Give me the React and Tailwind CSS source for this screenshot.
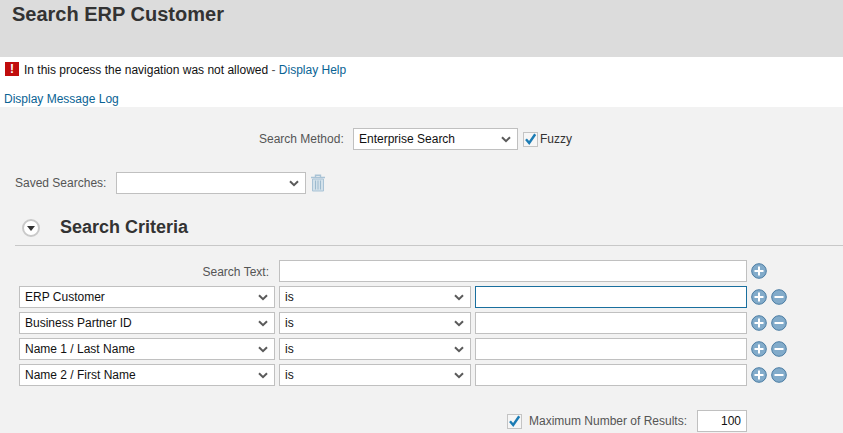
import React from "react";

const Chevron = () => (
  <svg width="10" height="7" viewBox="0 0 10 7" className="shrink-0">
    <path d="M1 1.2 L5 5.2 L9 1.2" fill="none" stroke="#5a5a5a" strokeWidth="2" />
  </svg>
);

const Select = ({ value, className }) => (
  <div className={`flex h-[22px] items-center justify-between border border-[#c0c0c0] bg-white pl-[5px] pr-[6px] text-[12px] text-[#111] ${className}`}>
    <span>{value}</span>
    <Chevron />
  </div>
);

const Input = ({ className, children }) => (
  <div className={`h-[22px] border bg-white ${className}`}>{children}</div>
);

const Check = () => (
  <span className="flex h-[15px] w-[15px] shrink-0 items-center justify-center border border-[#c4c4c4] bg-[#f6f6f6]">
    <svg width="13" height="12" viewBox="0 0 13 12">
      <path d="M2 6.2 L5.2 10 L11.2 1.2" fill="none" stroke="#1c7cb4" strokeWidth="2.4" />
    </svg>
  </span>
);

const RoundButton = ({ minus }) => (
  <svg width="16" height="16" viewBox="0 0 16 16" className="shrink-0">
    <circle cx="8" cy="8" r="7.3" fill="#82abca" stroke="#4a7ca3" strokeWidth="1" />
    <rect x="3.5" y="7" width="9" height="2" fill="#fff" />
    {!minus && <rect x="7" y="3.5" width="2" height="9" fill="#fff" />}
  </svg>
);

const Trash = () => (
  <svg width="16" height="18" viewBox="0 0 16 18">
    <path d="M1 3.5 H15 M5.5 3 V1.2 H10.5 V3" fill="none" stroke="#a9c3d6" strokeWidth="1.4" />
    <path d="M2.5 5 H13.5 V17 H2.5 Z" fill="#d3e1ea" stroke="#a9c3d6" strokeWidth="1" />
    <path d="M5.5 6.5 V15.5 M8 6.5 V15.5 M10.5 6.5 V15.5" stroke="#9dbace" strokeWidth="1" />
  </svg>
);

const rows = ["ERP Customer", "Business Partner ID", "Name 1 / Last Name", "Name 2 / First Name"];

export default function App() {
  return (
    <div className="h-[433px] w-[843px] overflow-hidden bg-[#f2f2f2] font-['Liberation_Sans',Arial,sans-serif]">
      <header className="h-[57px] bg-[#dcdcdc] pl-3 pt-[2px]">
        <h1 className="text-[20px] font-bold leading-[24px] text-[#333]">Search ERP Customer</h1>
      </header>

      <section className="h-[50px] bg-white pl-[4px] pt-[4px] text-[12px]">
        <div className="flex h-[18px] items-center gap-[5px] pl-[1px]">
          <span className="flex h-[14px] w-[14px] -translate-y-[1px] items-center justify-center bg-[#c00d0d] text-[12px] font-bold leading-none text-white">!</span>
          <span className="text-[#111]">
            In this process the navigation was not allowed <span className="text-[#555]">- </span>
            <span className="text-[#0a6394]">Display Help</span>
          </span>
        </div>
        <div className="mt-[13px] leading-[14px] text-[#0a6394]">Display Message Log</div>
      </section>

      <main className="px-0 pt-[21px] text-[12px]">
        <div className="flex h-[22px] items-center pl-[259px]">
          <span className="w-[94px] text-[#555]">Search Method:</span>
          <Select value="Enterprise Search" className="w-[165px]" />
          <span className="ml-[5px]"><Check /></span>
          <span className="ml-[2px] text-[#333]">Fuzzy</span>
        </div>

        <div className="mt-[22px] flex h-[22px] items-center pl-[15px]">
          <span className="w-[101px] text-[#555]">Saved Searches:</span>
          <Select value="" className="w-[190px]" />
          <span className="ml-[4px]"><Trash /></span>
        </div>

        <div className="ml-[15px] mt-[10px] flex h-[42px] items-end border-b border-[#c8c8c8] pb-[7px]">
          <span className="mb-[1px] ml-[7px] flex h-[18px] w-[18px] items-center justify-center rounded-full border-2 border-[#c9c9c9] bg-white">
            <svg width="8" height="5" viewBox="0 0 8 5"><path d="M0 0 H8 L4 5 Z" fill="#333" /></svg>
          </span>
          <h2 className="ml-[20px] text-[18px] font-bold leading-[22px] text-[#333]">Search Criteria</h2>
        </div>

        <div className="ml-[19px] mt-[14px] flex flex-col gap-[4px]">
          <div className="flex h-[22px] items-center">
            <span className="w-[250px] pt-[1px] text-right text-[#555]">Search Text:</span>
            <Input className="ml-[10px] w-[468px] border-[#c0c0c0]" />
            <span className="ml-[4px]"><RoundButton /></span>
          </div>
          {rows.map((r, i) => (
            <div key={r} className="flex h-[22px] items-center">
              <Select value={r} className="w-[256px]" />
              <Select value="is" className="ml-[4px] w-[192px]" />
              <Input className={`ml-[4px] w-[272px] ${i === 0 ? "border-[#1a6f9e]" : "border-[#c0c0c0]"}`} />
              <span className="ml-[4px] flex gap-[4px]"><RoundButton /><RoundButton minus /></span>
            </div>
          ))}
        </div>

        <div className="mt-[24px] flex h-[22px] items-center pl-[507px]">
          <Check />
          <span className="ml-[7px] w-[168px] text-[#555]">Maximum Number of Results:</span>
          <Input className="flex w-[50px] items-center justify-end border-[#c0c0c0] pr-[5px] text-[#111]">100</Input>
        </div>
      </main>
    </div>
  );
}
